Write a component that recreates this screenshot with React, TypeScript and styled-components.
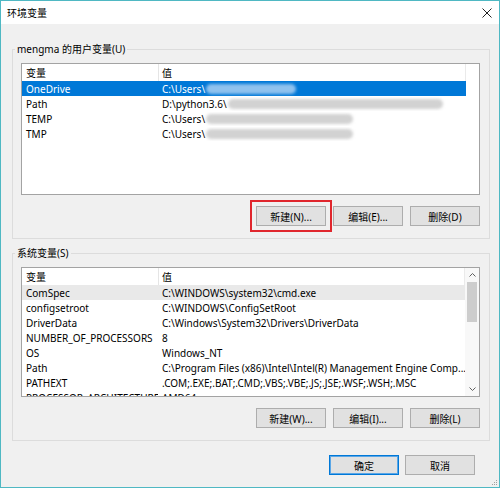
import React from 'react';
import styled, { createGlobalStyle } from 'styled-components';

const GlobalStyle = createGlobalStyle`
  html, body {
    margin: 0;
    padding: 0;
    background: #ffffff;
  }
  body {
    font-family: "Noto Sans", "Noto Sans CJK SC", sans-serif;
    font-size: 10px;
    color: #000;
  }
`;

const Window = styled.div`
  position: relative;
  width: 500px;
  height: 488px;
  box-sizing: border-box;
  border: 1px solid #4fb8c3;
  background: #f0f0f0;
  display: flex;
  flex-direction: column;
`;

const TitleBar = styled.div`
  height: 23px;
  background: #ffffff;
  display: flex;
  align-items: center;
  justify-content: space-between;
  padding: 0 7px 0 6px;
  font-size: 10px;
`;

const Body = styled.div`
  flex: 1;
  display: flex;
  flex-direction: column;
  padding: 18px 9px 0 11px;
`;

const GroupBox = styled.fieldset<{ $top: number }>`
  margin: ${({ $top }) => $top}px 0 0 0;
  min-width: 0;
  border: 1px solid #dcdcdc;
  padding: 6px 9px 12px 8px;
`;

const Legend = styled.legend`
  padding: 0 2px;
  margin-left: -6px;
  line-height: 15px;
`;

const ListBox = styled.div<{ $height: number }>`
  height: ${({ $height }) => $height}px;
  box-sizing: border-box;
  border: 1px solid #a3a3a3;
  background: #ffffff;
  display: flex;
  overflow: hidden;
`;

const Rows = styled.div`
  flex: 1;
  min-width: 0;
  display: flex;
  flex-direction: column;
`;

const HeaderRow = styled.div`
  display: grid;
  grid-template-columns: 136px 1fr;
  height: 17px;
  flex-shrink: 0;
  border-right: 1px solid #eaeaea;
`;

const HeaderCell = styled.div`
  display: flex;
  align-items: center;
  padding-left: 4px;
  & + & {
    border-left: 1px solid #e5e5e5;
    padding-left: 3px;
  }
`;

const Row = styled.div<{ $state?: 'selected' | 'muted' }>`
  display: grid;
  grid-template-columns: 136px 1fr;
  height: 15px;
  flex-shrink: 0;
  align-items: center;
  background: ${({ $state }) =>
    $state === 'selected' ? '#0078d7' : $state === 'muted' ? '#e9e9e9' : 'transparent'};
  color: ${({ $state }) => ($state === 'selected' ? '#ffffff' : '#000000')};
`;

const Cell = styled.div`
  display: flex;
  align-items: center;
  padding-left: 4px;
  white-space: nowrap;
  overflow: hidden;
`;

const Smudge = styled.span<{ $w: number; $tone: string }>`
  display: inline-block;
  width: ${({ $w }) => $w}px;
  height: 10px;
  margin-left: 1px;
  border-radius: 5px;
  background: ${({ $tone }) => $tone};
  filter: blur(1.5px);
  flex-shrink: 0;
`;

const SideGap = styled.div`
  width: 13px;
  flex-shrink: 0;
`;

const ScrollBar = styled.div`
  width: 14px;
  flex-shrink: 0;
  background: #f8f8f8;
  display: flex;
  flex-direction: column;
  align-items: center;
`;

const ArrowBox = styled.div`
  height: 14px;
  width: 100%;
  display: flex;
  align-items: center;
  justify-content: center;
`;

const Thumb = styled.div`
  width: 10px;
  height: 40px;
  background: #cdcdcd;
`;

const Track = styled.div`
  flex: 1;
`;

const ButtonRow = styled.div`
  display: flex;
  justify-content: flex-end;
  gap: 7px;
  margin-top: 11px;
`;

const Footer = styled.div`
  display: flex;
  justify-content: flex-end;
  gap: 6px;
  margin-top: 14px;
  padding-right: 15px;
`;

const Button = styled.button<{ $primary?: boolean; $marked?: boolean }>`
  width: 70px;
  height: 20px;
  box-sizing: border-box;
  padding: 0;
  font-family: inherit;
  font-size: 10px;
  color: #000;
  background: #e1e1e1;
  border: 1px solid ${({ $primary }) => ($primary ? '#0078d7' : '#adadad')};
  box-shadow: ${({ $primary }) => ($primary ? 'inset 0 0 0 1px #5aa6e6' : 'none')};
  outline: ${({ $marked }) => ($marked ? '2px solid #e0262d' : 'none')};
  outline-offset: 4px;
`;

const Grip = styled.svg`
  position: absolute;
  right: 1px;
  bottom: 1px;
`;

type Item = { name: string; value: string; smudge?: number; state?: 'selected' | 'muted' };

const userVars: Item[] = [
  { name: 'OneDrive', value: 'C:\\Users\\', smudge: 90, state: 'selected' },
  { name: 'Path', value: 'D:\\python3.6\\', smudge: 215 },
  { name: 'TEMP', value: 'C:\\Users\\', smudge: 147 },
  { name: 'TMP', value: 'C:\\Users\\', smudge: 147 },
];

const systemVars: Item[] = [
  { name: 'ComSpec', value: 'C:\\WINDOWS\\system32\\cmd.exe', state: 'muted' },
  { name: 'configsetroot', value: 'C:\\WINDOWS\\ConfigSetRoot' },
  { name: 'DriverData', value: 'C:\\Windows\\System32\\Drivers\\DriverData' },
  { name: 'NUMBER_OF_PROCESSORS', value: '8' },
  { name: 'OS', value: 'Windows_NT' },
  { name: 'Path', value: 'C:\\Program Files (x86)\\Intel\\Intel(R) Management Engine Comp...' },
  { name: 'PATHEXT', value: '.COM;.EXE;.BAT;.CMD;.VBS;.VBE;.JS;.JSE;.WSF;.WSH;.MSC' },
  { name: 'PROCESSOR_ARCHITECTURE', value: 'AMD64' },
];

const Chevron = ({ up }: { up?: boolean }) => (
  <svg width="7" height="4" viewBox="0 0 7 4">
    <polyline
      points={up ? '0.5,3.5 3.5,0.5 6.5,3.5' : '0.5,0.5 3.5,3.5 6.5,0.5'}
      fill="none"
      stroke="#606060"
      strokeWidth="1"
    />
  </svg>
);

const VarList = ({ items, height, scroll }: { items: Item[]; height: number; scroll?: boolean }) => (
  <ListBox $height={height}>
    <Rows>
      <HeaderRow>
        <HeaderCell>变量</HeaderCell>
        <HeaderCell>值</HeaderCell>
      </HeaderRow>
      {items.map((item, index) => (
        <Row key={index} $state={item.state}>
          <Cell>{item.name}</Cell>
          <Cell>
            {item.value}
            {item.smudge && (
              <Smudge
                $w={item.smudge}
                $tone={item.state === 'selected' ? '#8fc2ee' : '#d2d2d2'}
              />
            )}
          </Cell>
        </Row>
      ))}
    </Rows>
    {scroll ? (
      <ScrollBar>
        <ArrowBox>
          <Chevron up />
        </ArrowBox>
        <Thumb />
        <Track />
        <ArrowBox>
          <Chevron />
        </ArrowBox>
      </ScrollBar>
    ) : (
      <SideGap />
    )}
  </ListBox>
);

const App: React.FC = () => (
  <>
    <GlobalStyle />
    <Window>
      <TitleBar>
        <span>环境变量</span>
        <svg width="10" height="10" viewBox="0 0 10 10">
          <path d="M0.5 0.5 L9.5 9.5 M9.5 0.5 L0.5 9.5" stroke="#222" strokeWidth="1" />
        </svg>
      </TitleBar>
      <Body>
        <GroupBox $top={0}>
          <Legend>mengma 的用户变量(U)</Legend>
          <VarList items={userVars} height={132} />
          <ButtonRow>
            <Button $marked>新建(N)...</Button>
            <Button>编辑(E)...</Button>
            <Button>删除(D)</Button>
          </ButtonRow>
        </GroupBox>
        <GroupBox $top={7}>
          <Legend>系统变量(S)</Legend>
          <VarList items={systemVars} height={130} scroll />
          <ButtonRow>
            <Button>新建(W)...</Button>
            <Button>编辑(I)...</Button>
            <Button>删除(L)</Button>
          </ButtonRow>
        </GroupBox>
        <Footer>
          <Button $primary>确定</Button>
          <Button>取消</Button>
        </Footer>
      </Body>
      <Grip width="8" height="8" viewBox="0 0 8 8">
        <rect x="6" y="2" width="1" height="1" fill="#a0a0a0" />
        <rect x="4" y="4" width="1" height="1" fill="#a0a0a0" />
        <rect x="6" y="4" width="1" height="1" fill="#a0a0a0" />
        <rect x="2" y="6" width="1" height="1" fill="#a0a0a0" />
        <rect x="4" y="6" width="1" height="1" fill="#a0a0a0" />
        <rect x="6" y="6" width="1" height="1" fill="#a0a0a0" />
      </Grip>
    </Window>
  </>
);

export default App;
